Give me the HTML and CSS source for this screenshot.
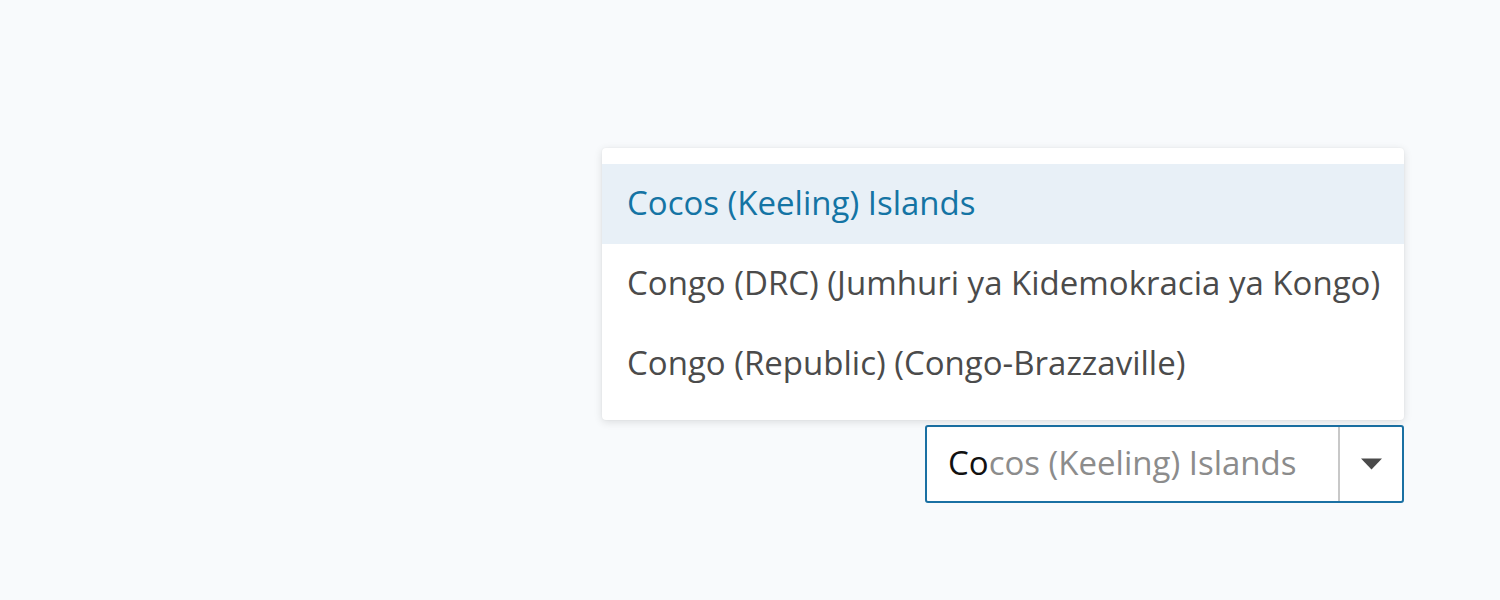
FILE: index.html
```html
<!DOCTYPE html>
<html>
<head>
<meta charset="utf-8">
<link rel="stylesheet" href="styles.css">
</head>
<body>
<div class="page">
  <div class="combo">
    <ul class="menu">
      <li class="option active">Cocos (Keeling) Islands</li>
      <li class="option">Congo (DRC) (Jumhuri ya Kidemokracia ya Kongo)</li>
      <li class="option">Congo (Republic) (Congo-Brazzaville)</li>
    </ul>
    <div class="field">
      <div class="value"><span class="typed">Co</span><span class="hint">cos (Keeling) Islands</span></div>
      <div class="toggle">
        <svg width="21" height="12" viewBox="0 0 21 12"><path d="M0 0.5 H21 L10.5 11.5 Z" fill="#4a4a4a"/></svg>
      </div>
    </div>
  </div>
</div>
</body>
</html>
```
FILE: styles.css
```css
html, body {
  margin: 0;
  padding: 0;
}
body {
  background: #f8fafc;
  font-family: "Open Sans", "Noto Sans", sans-serif;
  height: 600px;
}
.page {
  display: flex;
  justify-content: flex-end;
  padding: 425px 96px 0 0;
}
.combo {
  position: relative;
  width: 479px;
}
.menu {
  position: absolute;
  right: 0;
  bottom: calc(100% + 5px);
  width: 802px;
  margin: 0;
  padding: 16px 0;
  list-style: none;
  background: #fff;
  border-radius: 4px;
  box-shadow: 0 2px 8px rgba(0, 0, 0, 0.12), 0 0 2px rgba(0, 0, 0, 0.06);
  box-sizing: border-box;
}
.option {
  height: 80px;
  display: flex;
  align-items: center;
  padding: 0 0 4px 25px;
  box-sizing: border-box;
  font-size: 33px;
  color: #4b4b4b;
  white-space: nowrap;
}
.option.active {
  background: #e8f0f7;
  color: #1474a4;
}
.field {
  display: flex;
  height: 78px;
  border: 2px solid #1a70a3;
  border-radius: 3px;
  background: #fff;
  box-sizing: border-box;
}
.value {
  flex: 1;
  display: flex;
  align-items: center;
  padding: 0 0 4px 21px;
  font-size: 33px;
  white-space: nowrap;
}
.typed {
  color: #111;
}
.hint {
  color: #8c8c8c;
}
.toggle {
  width: 62px;
  border-left: 2px solid #c8c8c8;
  display: flex;
  align-items: center;
  justify-content: center;
}
```
